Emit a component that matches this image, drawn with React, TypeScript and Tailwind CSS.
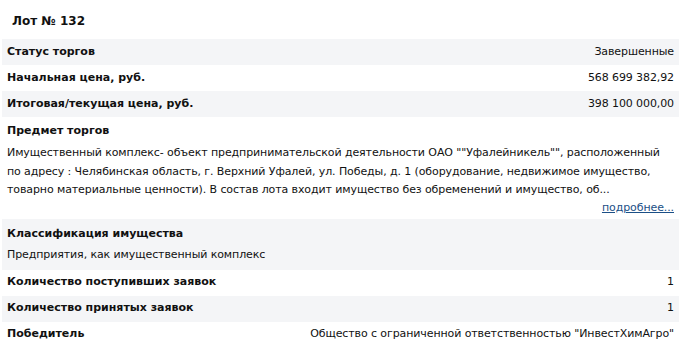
import React from 'react';

interface Row {
  label: string;
  value: string;
  grey: boolean;
}

const topRows: Row[] = [
  { label: 'Статус торгов', value: 'Завершенные', grey: true },
  { label: 'Начальная цена, руб.', value: '568 699 382,92', grey: false },
  { label: 'Итоговая/текущая цена, руб.', value: '398 100 000,00', grey: true },
];

const bottomRows: Row[] = [
  { label: 'Количество поступивших заявок', value: '1', grey: false },
  { label: 'Количество принятых заявок', value: '1', grey: true },
  { label: 'Победитель', value: 'Общество с ограниченной ответственностью "ИнвестХимАгро"', grey: false },
];

function InfoRow({ label, value, grey }: Row) {
  return (
    <div className={`flex h-[26px] items-center justify-between px-[5px] ${grey ? 'bg-[#f4f5f7]' : 'bg-white'}`}>
      <span className="font-bold">{label}</span>
      <span className="tracking-[-0.1px]">{value}</span>
    </div>
  );
}

export default function App() {
  return (
    <div className="min-h-screen bg-white px-[2px] text-[11px] text-[#111]" style={{ fontFamily: '"DejaVu Sans", Verdana, sans-serif' }}>
      <div className="w-[677px]">
        <h1 className="h-[39px] pl-[10px] pt-[12px] text-[12px] font-bold">Лот № 132</h1>

        {topRows.map((row) => (
          <InfoRow key={row.label} {...row} />
        ))}

        <div className="px-[5px] pt-[5px] pb-[3px]">
          <div className="font-bold leading-[18px]">Предмет торгов</div>
          <p className="mt-[4px] leading-[18.5px] tracking-[-0.1px]">
            Имущественный комплекс- объект предпринимательской деятельности ОАО ""Уфалейникель"", расположенный
            по адресу : Челябинская область, г. Верхний Уфалей, ул. Победы, д. 1 (оборудование, недвижимое имущество,
            товарно материальные ценности). В состав лота входит имущество без обременений и имущество, об...
          </p>
          <div className="text-right leading-[16px] tracking-[-0.1px]">
            <a href="#" className="text-[#1b4f86] underline">подробнее...</a>
          </div>
        </div>

        <div className="bg-[#f4f5f7] px-[5px] pt-[6px] pb-[6px]">
          <div className="font-bold leading-[18px]">Классификация имущества</div>
          <div className="mt-[3px] leading-[18px] tracking-[-0.1px]">Предприятия, как имущественный комплекс</div>
        </div>

        {bottomRows.map((row) => (
          <InfoRow key={row.label} {...row} />
        ))}
      </div>
    </div>
  );
}
